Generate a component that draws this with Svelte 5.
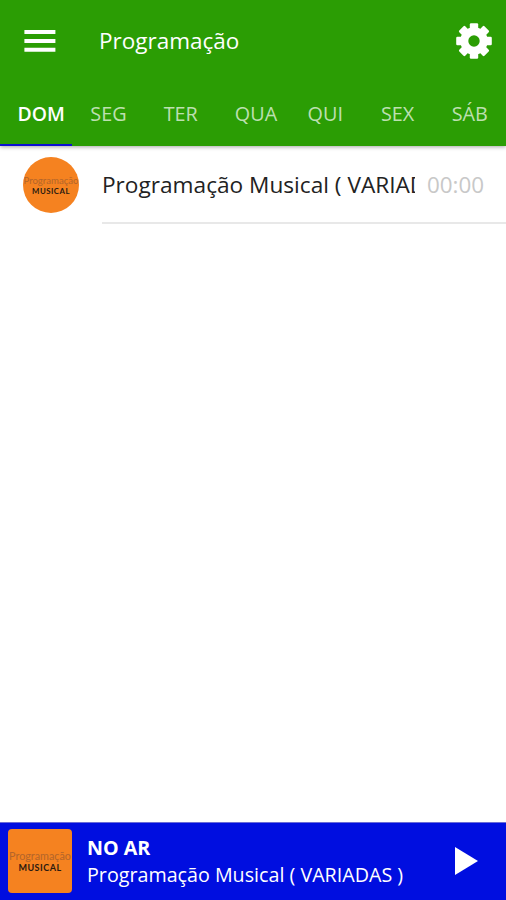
<script>
  const days = ['DOM', 'SEG', 'TER', 'QUA', 'QUI', 'SEX', 'SÁB']
  const teeth = [0, 45, 90, 135, 180, 225, 270, 315]

  const programs = [
    { title: 'Programação Musical ( VARIADAS )', time: '00:00' }
  ]

  let active = 0
  let playing = false
</script>

<main>
  <header>
    <div class="toolbar">
      <button class="menu" aria-label="Menu">
        <svg width="32" height="22" viewBox="0 0 32 22" fill="currentColor">
          <path d="M.4 0h31v4H.4zM.4 8.9h31v4H.4zM.4 17.8h31v4H.4z" />
        </svg>
      </button>
      <h1>Programação</h1>
      <button class="settings" aria-label="Configurações">
        <svg width="36" height="36" viewBox="-18 -18 36 36" fill="currentColor">
          <circle r="9.7" fill="none" stroke="currentColor" stroke-width="8" />
          {#each teeth as angle}
            <path transform="rotate({angle})" d="M-4.2 -12.5V-16.6Q-4.2 -17.8 -3 -17.8H3Q4.2 -17.8 4.2 -16.6V-12.5z" />
          {/each}
        </svg>
      </button>
    </div>
    <nav>
      {#each days as day, i}
        <button class:active={i === active} on:click={() => (active = i)}><span>{day}</span></button>
      {/each}
    </nav>
  </header>

  <ul>
    {#each programs as program}
      <li>
        <div class="cover round"><span>Programação</span><b>MUSICAL</b></div>
        <div class="item">
          <span class="title">{program.title}</span>
          <time>{program.time}</time>
        </div>
      </li>
    {/each}
  </ul>

  <footer>
    <div class="cover"><span>Programação</span><b>MUSICAL</b></div>
    <div class="live">
      <strong>NO AR</strong>
      <p>{programs[0].title}</p>
    </div>
    <button class="play" aria-label="Tocar" on:click={() => (playing = !playing)}>
      <svg width="23" height="28" viewBox="0 0 23 28" fill="currentColor">
        <path d="M0 0L23 14L0 28z" />
      </svg>
    </button>
  </footer>
</main>

<style>
  :global(body) {
    margin: 0;
    background: #fff;
  }

  main {
    display: flex;
    flex-direction: column;
    height: 100vh;
    overflow: hidden;
    font-family: 'Open Sans', 'Noto Sans', sans-serif;
  }

  button {
    padding: 0;
    border: 0;
    background: none;
    color: #fff;
    font: inherit;
  }

  svg {
    display: block;
  }

  header {
    height: 146px;
    background: #2b9d04;
    color: #fff;
    box-shadow: 0 1px 4px rgba(0, 0, 0, 0.35);
  }

  .toolbar {
    display: flex;
    align-items: center;
    height: 82px;
    padding: 0 14px 0 24px;
  }

  h1 {
    flex: 1;
    margin: 0 0 0 43px;
    font-size: 22.5px;
    font-weight: 500;
    line-height: 32px;
  }

  nav {
    display: grid;
    grid-template-columns: repeat(7, 1fr);
    height: 64px;
  }

  nav button {
    display: flex;
    align-items: center;
    min-width: 0;
    padding: 0 18px;
    border-bottom: 2px solid transparent;
    color: rgba(255, 255, 255, 0.7);
    font-size: 19.8px;
  }

  nav span {
    min-width: 100%;
    text-align: center;
  }

  nav .active {
    padding-left: 17.5px;
    border-color: #0c10d0;
    color: #fff;
    font-size: 19.4px;
    font-weight: 550;
  }

  ul {
    flex: 1;
    margin: 0;
    padding: 0;
    list-style: none;
  }

  li {
    display: flex;
    align-items: center;
    height: 78px;
    padding-left: 23px;
  }

  .item {
    display: flex;
    flex: 1;
    align-items: center;
    min-width: 0;
    height: 76px;
    margin-left: 23px;
    padding-right: 22px;
    border-bottom: 2px solid #e8e8e8;
    font-size: 22.65px;
  }

  .title {
    flex: 1;
    overflow: hidden;
    color: #222;
    white-space: nowrap;
  }

  time {
    margin-left: 12px;
    color: #c8c8c8;
    font-size: 22.4px;
  }

  .cover {
    display: flex;
    flex-direction: column;
    align-items: center;
    justify-content: center;
    box-sizing: border-box;
    flex: none;
    width: 64px;
    height: 64px;
    padding-top: 2px;
    overflow: hidden;
    border-radius: 4px;
    background: #f58220;
    color: #2b1a10;
    font-family: Lato, sans-serif;
    font-size: 10.8px;
    line-height: 12px;
  }

  .cover span {
    color: #b3652a;
  }

  .cover b {
    font-size: 9px;
    letter-spacing: 0.5px;
  }

  .cover.round {
    width: 56px;
    height: 56px;
    padding-top: 1px;
    border-radius: 50%;
    font-size: 9.6px;
    line-height: 10px;
  }

  .cover.round b {
    font-size: 7.8px;
  }

  footer {
    display: flex;
    align-items: center;
    box-sizing: border-box;
    height: 78px;
    padding: 0 28px 2px 8px;
    border-top: 1px solid #6a6cd8;
    background: #000ee0;
    color: #fff;
  }

  .live {
    flex: 1;
    margin-left: 15px;
    padding-top: 1px;
    font-size: 19.7px;
    line-height: 27px;
    white-space: nowrap;
  }

  .live p {
    margin: 0;
  }
</style>
